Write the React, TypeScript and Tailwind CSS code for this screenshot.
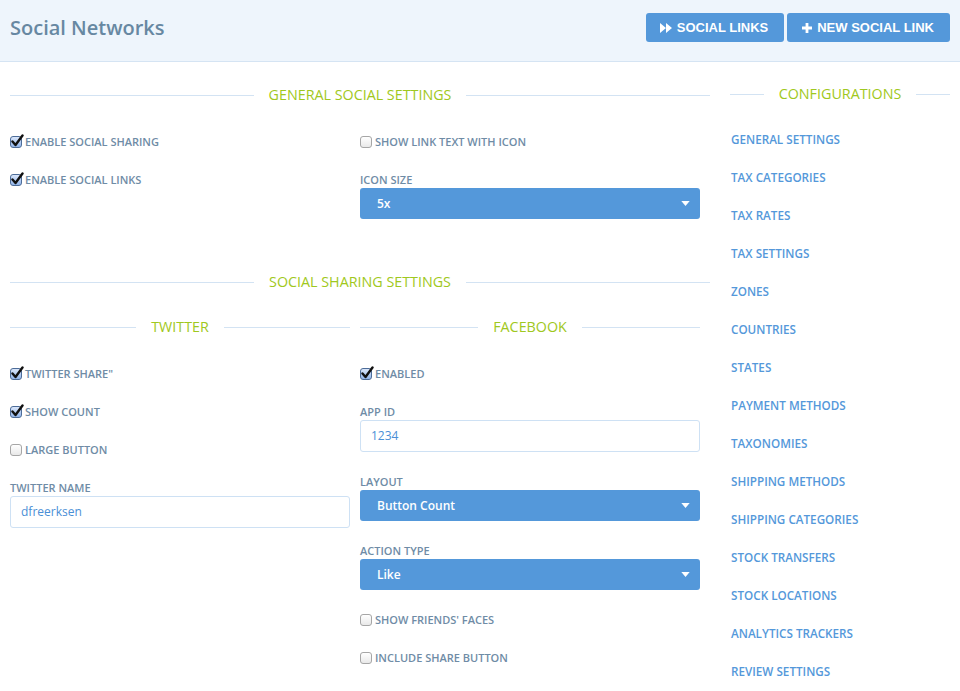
import type { ReactNode } from 'react'

const sidebarLinks = [
  'General Settings',
  'Tax Categories',
  'Tax Rates',
  'Tax Settings',
  'Zones',
  'Countries',
  'States',
  'Payment Methods',
  'Taxonomies',
  'Shipping Methods',
  'Shipping Categories',
  'Stock Transfers',
  'Stock Locations',
  'Analytics Trackers',
  'Review Settings',
]

function SectionTitle({ children, className = '' }: { children: ReactNode; className?: string }) {
  return (
    <div className={`flex items-center h-5 ${className}`}>
      <div className="flex-1 h-px bg-[#d3e3f3]" />
      <span className="px-[15px] text-[14.3px] leading-5 text-[#9fc820] uppercase">{children}</span>
      <div className="flex-1 h-px bg-[#d3e3f3]" />
    </div>
  )
}

function Box({ checked }: { checked?: boolean }) {
  if (!checked) {
    return (
      <span className="block w-[12px] h-[12px] rounded-[3px] border border-[#a6a6a6] bg-gradient-to-b from-white to-[#e9e9e9] shrink-0" />
    )
  }
  return (
    <span className="relative block w-[12px] h-[12px] rounded-[3px] border border-[#4d6c98] bg-gradient-to-b from-[#dbe7fb] to-[#92b5ea] shrink-0">
      <svg viewBox="0 0 14 14" className="absolute -left-[1px] -top-[3px] w-[14px] h-[14px]">
        <path d="M2.5 7.5 L5.5 11 L12.5 1.5" fill="none" stroke="#111" strokeWidth="2.4" strokeLinecap="round" strokeLinejoin="round" />
      </svg>
    </span>
  )
}

function CheckRow({ label, checked }: { label: string; checked?: boolean }) {
  return (
    <div className="flex items-center gap-[3px] h-4">
      <Box checked={checked} />
      <span className="text-[11px] leading-4 font-semibold uppercase text-[#6f8ca6]">{label}</span>
    </div>
  )
}

function Label({ children }: { children: ReactNode }) {
  return <div className="text-[11px] leading-4 font-semibold uppercase text-[#6f8ca6]">{children}</div>
}

function Select({ value }: { value: string }) {
  return (
    <div className="flex items-center justify-between h-[31px] rounded-[3px] bg-[#5498da] pl-[17px] pr-[10px]">
      <span className="text-[12px] font-semibold text-white">{value}</span>
      <svg viewBox="0 0 10 6" className="w-[9px] h-[5px]">
        <path d="M0 0 L10 0 L5 6 Z" fill="#fff" />
      </svg>
    </div>
  )
}

function TextInput({ value }: { value: string }) {
  return (
    <div className="flex items-center h-[32px] rounded-[3px] border border-[#cee1f4] bg-white pl-[10px]">
      <span className="text-[12px] text-[#4a8fd6]">{value}</span>
    </div>
  )
}

export default function App() {
  return (
    <div className="min-h-screen bg-white font-['Open_Sans',sans-serif]">
      <header className="h-[62px] bg-[#eef5fc] border-b border-[#d5e4f3] flex items-start justify-between px-[10px] pt-[13px]">
        <h1 className="text-[20px] leading-[29px] font-semibold text-[#6788a2]">Social Networks</h1>
        <div className="flex gap-[3px] font-['Liberation_Sans',Arial,sans-serif]">
          <button className="flex items-center gap-[5px] h-[29px] rounded-[3px] bg-[#5498da] pl-[14px] pr-[16px] text-[13px] font-bold text-white uppercase">
            <svg viewBox="0 0 12 10" className="w-[12px] h-[10px]">
              <path d="M0 0 L6 5 L0 10 Z M6 0 L12 5 L6 10 Z" fill="#fff" />
            </svg>
            Social Links
          </button>
          <button className="flex items-center gap-[5px] h-[29px] rounded-[3px] bg-[#5498da] pl-[15px] pr-[16px] text-[13px] font-bold text-white uppercase">
            <svg viewBox="0 0 10 10" className="w-[10px] h-[10px]">
              <path d="M3.6 0 H6.4 V3.6 H10 V6.4 H6.4 V10 H3.6 V6.4 H0 V3.6 H3.6 Z" fill="#fff" />
            </svg>
            New Social Link
          </button>
        </div>
      </header>

      <div className="flex gap-[20px] px-[10px]">
        <main className="w-[700px]">
          <SectionTitle className="mt-[23px]">General Social Settings</SectionTitle>
          <div className="grid grid-cols-2 gap-x-[10px] pr-[10px] mt-[29px]">
            <div className="flex flex-col gap-[22px]">
              <CheckRow label="Enable Social Sharing" checked />
              <CheckRow label="Enable Social Links" checked />
            </div>
            <div className="flex flex-col gap-[22px]">
              <CheckRow label="Show Link Text With Icon" />
              <div>
                <Label>Icon Size</Label>
                <Select value="5x" />
              </div>
            </div>
          </div>

          <SectionTitle className="mt-[53px]">Social Sharing Settings</SectionTitle>
          <div className="grid grid-cols-2 gap-x-[10px] pr-[10px] mt-[25px]">
            <div>
              <SectionTitle>Twitter</SectionTitle>
              <div className="flex flex-col gap-[22px] mt-[29px]">
                <CheckRow label={'Twitter Share"'} checked />
                <CheckRow label="Show Count" checked />
                <CheckRow label="Large Button" />
                <div>
                  <Label>Twitter Name</Label>
                  <TextInput value="dfreerksen" />
                </div>
              </div>
            </div>
            <div>
              <SectionTitle>Facebook</SectionTitle>
              <div className="flex flex-col gap-[22px] mt-[29px]">
                <CheckRow label="Enabled" checked />
                <div>
                  <Label>App ID</Label>
                  <TextInput value="1234" />
                </div>
                <div>
                  <Label>Layout</Label>
                  <Select value="Button Count" />
                </div>
                <div>
                  <Label>Action Type</Label>
                  <Select value="Like" />
                </div>
                <CheckRow label="Show Friends' Faces" />
                <CheckRow label="Include Share Button" />
              </div>
            </div>
          </div>
        </main>

        <aside className="w-[220px]">
          <SectionTitle className="mt-[22px]">Configurations</SectionTitle>
          <nav className="flex flex-col gap-[22px] mt-[27px] pl-px">
            {sidebarLinks.map((l) => (
              <a key={l} href="#" className="text-[11.7px] leading-4 font-semibold uppercase text-[#5498da]">
                {l}
              </a>
            ))}
          </nav>
        </aside>
      </div>
    </div>
  )
}
